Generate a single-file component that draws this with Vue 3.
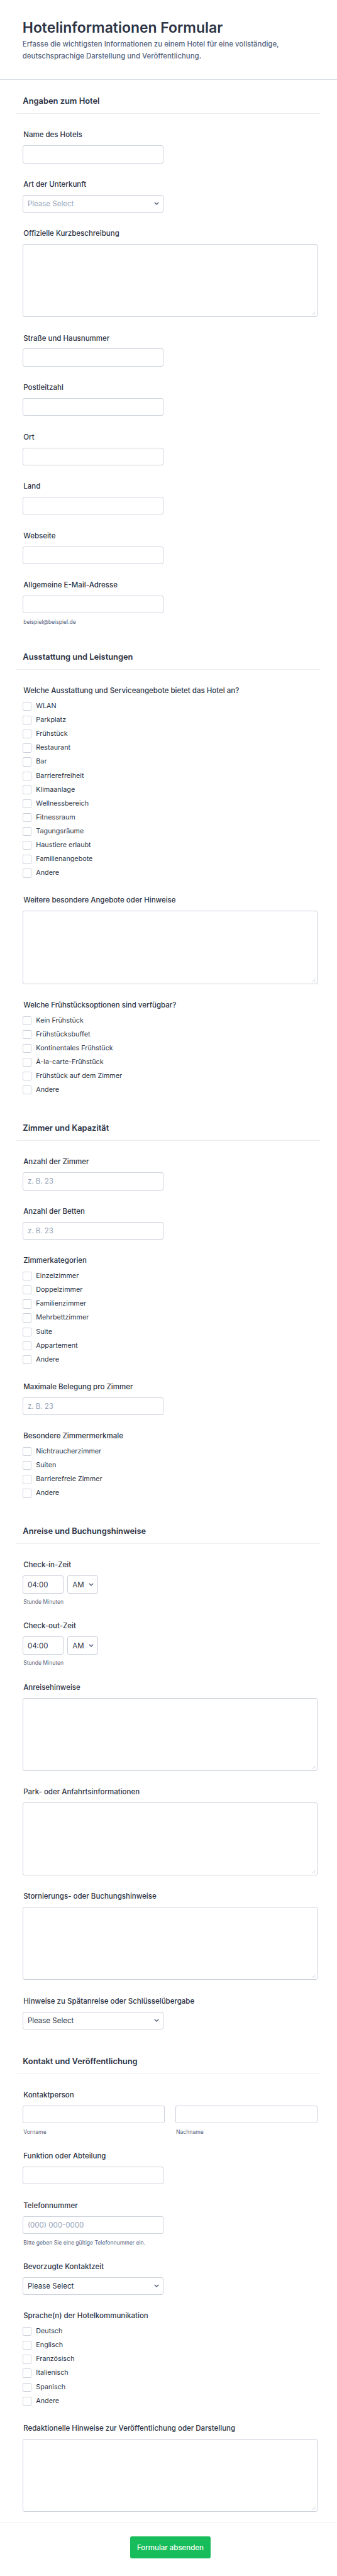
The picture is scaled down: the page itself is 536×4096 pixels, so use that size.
<template>
  <form class="form" @submit.prevent>
    <header class="form-header">
      <h1>Hotelinformationen Formular</h1>
      <p>Erfasse die wichtigsten Informationen zu einem Hotel für eine vollständige, deutschsprachige Darstellung und Veröffentlichung.</p>
    </header>

    <section v-for="section in sections" :key="section.title" class="section">
      <h2>{{ section.title }}</h2>
      <div class="fields">
        <div v-for="field in section.fields" :key="field.label" class="field">
          <label class="field-label">{{ field.label }}</label>

          <input v-if="field.type === 'text'" class="control half" type="text" :placeholder="field.placeholder" />

          <div v-else-if="field.type === 'select'" class="select half">
            <select :class="['control', { muted: field.muted }]">
              <option>Please Select</option>
            </select>
            <svg class="chevron" viewBox="0 0 8 6"><path d="M1.2 1.2 4 4 6.8 1.2" /></svg>
          </div>

          <div v-else-if="field.type === 'textarea'" class="area">
            <textarea class="control"></textarea>
            <svg class="grip" viewBox="0 0 6 6"><path d="M.5 5.5 5.5.5M3.2 5.5 5.5 3.2" /></svg>
          </div>

          <ul v-else-if="field.type === 'checkbox'" class="options">
            <li v-for="option in field.options" :key="option">
              <label class="option">
                <input type="checkbox" />
                <span>{{ option }}</span>
              </label>
            </li>
          </ul>

          <div v-else-if="field.type === 'time'" class="time">
            <input class="control time-input" type="text" value="04:00" />
            <div class="select period">
              <select class="control">
                <option>AM</option>
                <option>PM</option>
              </select>
              <svg class="chevron" viewBox="0 0 8 6"><path d="M1.2 1.2 4 4 6.8 1.2" /></svg>
            </div>
          </div>

          <div v-else-if="field.type === 'name'" class="name">
            <div v-for="part in field.parts" :key="part">
              <input class="control" type="text" />
              <span class="hint">{{ part }}</span>
            </div>
          </div>

          <span v-if="field.hint" class="hint">{{ field.hint }}</span>
        </div>
      </div>
    </section>

    <footer class="form-footer">
      <button type="submit" class="submit-btn">Formular absenden</button>
    </footer>
  </form>
</template>

<script setup>
const sections = [
  {
    title: 'Angaben zum Hotel',
    fields: [
      { label: 'Name des Hotels', type: 'text' },
      { label: 'Art der Unterkunft', type: 'select', muted: true },
      { label: 'Offizielle Kurzbeschreibung', type: 'textarea' },
      { label: 'Straße und Hausnummer', type: 'text' },
      { label: 'Postleitzahl', type: 'text' },
      { label: 'Ort', type: 'text' },
      { label: 'Land', type: 'text' },
      { label: 'Webseite', type: 'text' },
      { label: 'Allgemeine E-Mail-Adresse', type: 'text', hint: 'beispiel@beispiel.de' }
    ]
  },
  {
    title: 'Ausstattung und Leistungen',
    fields: [
      {
        label: 'Welche Ausstattung und Serviceangebote bietet das Hotel an?',
        type: 'checkbox',
        options: [
          'WLAN', 'Parkplatz', 'Frühstück', 'Restaurant', 'Bar', 'Barrierefreiheit', 'Klimaanlage',
          'Wellnessbereich', 'Fitnessraum', 'Tagungsräume', 'Haustiere erlaubt', 'Familienangebote', 'Andere'
        ]
      },
      { label: 'Weitere besondere Angebote oder Hinweise', type: 'textarea' },
      {
        label: 'Welche Frühstücksoptionen sind verfügbar?',
        type: 'checkbox',
        options: [
          'Kein Frühstück', 'Frühstücksbuffet', 'Kontinentales Frühstück',
          'À-la-carte-Frühstück', 'Frühstück auf dem Zimmer', 'Andere'
        ]
      }
    ]
  },
  {
    title: 'Zimmer und Kapazität',
    fields: [
      { label: 'Anzahl der Zimmer', type: 'text', placeholder: 'z. B. 23' },
      { label: 'Anzahl der Betten', type: 'text', placeholder: 'z. B. 23' },
      {
        label: 'Zimmerkategorien',
        type: 'checkbox',
        options: ['Einzelzimmer', 'Doppelzimmer', 'Familienzimmer', 'Mehrbettzimmer', 'Suite', 'Appartement', 'Andere']
      },
      { label: 'Maximale Belegung pro Zimmer', type: 'text', placeholder: 'z. B. 23' },
      {
        label: 'Besondere Zimmermerkmale',
        type: 'checkbox',
        options: ['Nichtraucherzimmer', 'Suiten', 'Barrierefreie Zimmer', 'Andere']
      }
    ]
  },
  {
    title: 'Anreise und Buchungshinweise',
    fields: [
      { label: 'Check-in-Zeit', type: 'time', hint: 'Stunde Minuten' },
      { label: 'Check-out-Zeit', type: 'time', hint: 'Stunde Minuten' },
      { label: 'Anreisehinweise', type: 'textarea' },
      { label: 'Park- oder Anfahrtsinformationen', type: 'textarea' },
      { label: 'Stornierungs- oder Buchungshinweise', type: 'textarea' },
      { label: 'Hinweise zu Spätanreise oder Schlüsselübergabe', type: 'select' }
    ]
  },
  {
    title: 'Kontakt und Veröffentlichung',
    fields: [
      { label: 'Kontaktperson', type: 'name', parts: ['Vorname', 'Nachname'] },
      { label: 'Funktion oder Abteilung', type: 'text' },
      {
        label: 'Telefonnummer',
        type: 'text',
        placeholder: '(000) 000-0000',
        hint: 'Bitte geben Sie eine gültige Telefonnummer ein.'
      },
      { label: 'Bevorzugte Kontaktzeit', type: 'select' },
      {
        label: 'Sprache(n) der Hotelkommunikation',
        type: 'checkbox',
        options: ['Deutsch', 'Englisch', 'Französisch', 'Italienisch', 'Spanisch', 'Andere']
      },
      { label: 'Redaktionelle Hinweise zur Veröffentlichung oder Darstellung', type: 'textarea' }
    ]
  }
]
</script>

<style>
body {
  margin: 0;
  background: #fff;
}
</style>

<style scoped>
.form {
  width: 536px;
  height: 4096px;
  overflow: hidden;
  background: #fff;
  color: #2c3345;
  font-family: Inter, 'Liberation Sans', sans-serif;
}

.form * {
  box-sizing: border-box;
}

.form-header {
  height: 127.3px;
  padding: 29px 36.3px 0 35.8px;
  border-bottom: 1px solid #d7dde8;
}

h1 {
  margin: 0;
  font-size: 22.95px;
  font-weight: 600;
  line-height: 30px;
}

.form-header p {
  max-width: 440px;
  margin: 2px 0 0;
  color: #57647e;
  font-size: 11.42px;
  font-weight: 500;
  line-height: 18.5px;
}

.section {
  padding: 23.7px 27.3px 0 26.3px;
}

h2 {
  margin: 0;
  padding: 0 10px 9px;
  border-bottom: 1px solid #ececf1;
  font-size: 12.87px;
  font-weight: 600;
  line-height: 20px;
}

.fields {
  display: flex;
  flex-direction: column;
  gap: 26.15px;
  padding: 26.2px 4.2px 17.2px 9.6px;
}

.field-label {
  display: block;
  margin-bottom: 9.35px;
  padding-left: 1.3px;
  font-size: 11.5px;
  font-weight: 500;
  line-height: 14.6px;
}

.control {
  display: block;
  width: 100%;
  height: 28.45px;
  margin: 0;
  padding: 0 7px;
  appearance: none;
  background: #fff;
  border: 1px solid #cbd0dc;
  border-radius: 3px;
  outline: none;
  color: #2c3345;
  font-family: inherit;
  font-size: 11.5px;
}

.control::placeholder {
  color: #95a3b8;
  opacity: 1;
}

.control.muted {
  color: #95a3b8;
}

.half {
  width: 224.3px;
}

.select,
.area {
  position: relative;
}

.chevron {
  position: absolute;
  top: 11.6px;
  right: 7.3px;
  width: 8px;
  height: 6px;
  fill: none;
  stroke: #57647e;
  stroke-width: 1.5;
  stroke-linecap: round;
  stroke-linejoin: round;
}

textarea.control {
  height: 116.25px;
  resize: none;
}

.grip {
  position: absolute;
  right: 3px;
  bottom: 3px;
  width: 6px;
  height: 6px;
  fill: none;
  stroke: #b9bdc8;
  stroke-width: 0.6;
}

.options {
  display: flex;
  flex-direction: column;
  gap: 7.88px;
  margin: 0;
  padding: 0.9px 0 2.6px;
  list-style: none;
}

.option {
  display: flex;
  align-items: center;
  gap: 7.2px;
  height: 14.25px;
  font-size: 10.78px;
  line-height: 14.25px;
}

.option input {
  flex: none;
  width: 14.25px;
  height: 14.25px;
  margin: 0;
  appearance: none;
  background: #fff;
  border: 1px solid #cbd0dc;
  border-radius: 2px;
}

.time {
  display: flex;
  gap: 6px;
}

.time-input {
  width: 65.4px;
}

.period {
  width: 48.6px;
}

.name {
  display: grid;
  grid-template-columns: 1fr 1fr;
  gap: 17.1px;
}

.hint {
  display: block;
  margin-top: 8.6px;
  padding-left: 1.3px;
  color: #57647e;
  font-size: 8.6px;
  line-height: 10px;
}

.form-footer {
  display: flex;
  justify-content: center;
  padding: 21.4px 0 28.5px 6px;
  border-top: 1px solid #ececf1;
}

.submit-btn {
  width: 128.6px;
  height: 34.3px;
  padding: 0;
  background: #18bd5b;
  border: 0;
  border-radius: 3px;
  color: #fff;
  font-family: inherit;
  font-size: 11.48px;
  font-weight: 500;
}
</style>
